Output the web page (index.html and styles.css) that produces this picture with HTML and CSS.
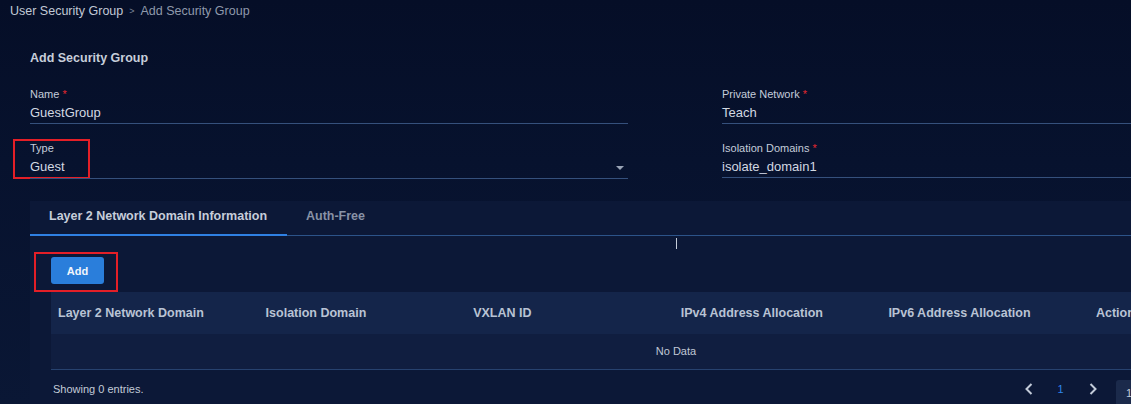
FILE: index.html
```html
<!DOCTYPE html>
<html>
<head>
<meta charset="utf-8">
<link rel="stylesheet" href="styles.css">
</head>
<body>
<div class="page">
  <div class="crumbs">
    <span class="crumb">User Security Group</span>
    <span class="sep">&gt;</span>
    <span class="crumb current">Add Security Group</span>
  </div>

  <div class="content">
    <h1 class="title">Add Security Group</h1>

    <div class="form">
      <div class="field">
        <div class="label">Name <span class="req">*</span></div>
        <div class="value">GuestGroup</div>
      </div>
      <div class="field">
        <div class="label">Private Network <span class="req">*</span></div>
        <div class="value">Teach</div>
      </div>
      <div class="field select annotated">
        <span class="mark mark-type"></span>
        <div class="label">Type</div>
        <div class="value">Guest<span class="caret"></span></div>
      </div>
      <div class="field">
        <div class="label">Isolation Domains <span class="req">*</span></div>
        <div class="value">isolate_domain1</div>
      </div>
    </div>

    <div class="panel">
      <div class="tabs">
        <div class="tab active">Layer 2 Network Domain Information</div>
        <div class="tab">Auth-Free</div>
      </div>
      <div class="cursor-row"><span class="cursor"></span></div>
      <div class="panel-body">
        <div class="toolbar">
          <div class="annotated">
            <span class="mark mark-add"></span>
            <button class="btn">Add</button>
          </div>
        </div>
        <div class="table">
          <div class="thead">
            <div class="th">Layer 2 Network Domain</div>
            <div class="th">Isolation Domain</div>
            <div class="th">VXLAN ID</div>
            <div class="th">IPv4 Address Allocation</div>
            <div class="th">IPv6 Address Allocation</div>
            <div class="th">Action</div>
          </div>
          <div class="empty">No Data</div>
        </div>
        <div class="footer">
          <span class="count">Showing 0 entries.</span>
          <div class="pager">
            <svg class="chev" width="10" height="14" viewBox="0 0 10 14"><path d="M7.5 2 L2.5 7 L7.5 12" fill="none" stroke="#c3cbd9" stroke-width="2"/></svg>
            <span class="page-num">1</span>
            <svg class="chev chev-next" width="10" height="14" viewBox="0 0 10 14"><path d="M2.5 2 L7.5 7 L2.5 12" fill="none" stroke="#c3cbd9" stroke-width="2"/></svg>
            <span class="size">10</span>
          </div>
        </div>
      </div>
    </div>
  </div>
</div>
</body>
</html>
```

FILE: styles.css
```css
* { box-sizing: border-box; }
html, body {
  margin: 0;
  padding: 0;
  width: 1131px;
  height: 404px;
  overflow: hidden;
}
body {
  font-family: "Liberation Sans", Arial, sans-serif;
  background: linear-gradient(180deg, #050e27 0%, #07122e 40%, #0a1735 100%);
  color: #c9d0dc;
}
.page {
  width: 1131px;
  height: 404px;
  overflow: hidden;
}
.crumbs {
  display: flex;
  align-items: center;
  height: 21px;
  padding-left: 10px;
  font-size: 12.5px;
  gap: 6px;
}
.crumb { color: #c2c9d6; }
.crumb.current { color: #8f99ab; }
.sep { color: #7d879a; font-size: 9px; }

.content {
  padding-left: 30px;
}
.title {
  margin: 29px 0 0 0;
  height: 16px;
  line-height: 16px;
  font-size: 12.5px;
  font-weight: bold;
  color: #c7ceda;
}
.form {
  display: grid;
  grid-template-columns: 598px 598px;
  column-gap: 94px;
  row-gap: 17px;
  margin-top: 21px;
  width: 1300px;
}
.field { position: relative; }
.label {
  height: 14px;
  line-height: 14px;
  font-size: 11px;
  color: #c4ccda;
  margin-bottom: 2px;
}
.req { color: #e5282f; }
.value {
  position: relative;
  height: 21px;
  line-height: 20px;
  font-size: 13px;
  color: #d2d8e2;
  border-bottom: 1px solid #35507c;
}
.select .value { height: 22px; line-height: 20px; }
.caret {
  position: absolute;
  right: 4px;
  top: 9px;
  width: 0;
  height: 0;
  border-left: 4px solid transparent;
  border-right: 4px solid transparent;
  border-top: 4px solid #9aa4b6;
}
.annotated { position: relative; }
.mark {
  position: absolute;
  border: 2px solid #e41f27;
  pointer-events: none;
}
.mark-type {
  left: -17px;
  top: -2px;
  width: 77px;
  height: 40px;
}
.mark-add {
  left: -17px;
  top: -5px;
  width: 84px;
  height: 40px;
}

.panel {
  margin-top: 22px;
  width: 1300px;
  height: 220px;
  background: #0c1837;
}
.tabs {
  display: flex;
  height: 35px;
  border-bottom: 1px solid #2c5389;
}
.tab {
  height: 35px;
  line-height: 31px;
  padding: 0 19px;
  font-size: 12.5px;
  font-weight: bold;
  color: #8892a6;
}
.tab.active {
  color: #c6cdda;
  border-bottom: 2px solid #2f80e3;
  width: 257px;
}
.cursor-row {
  position: relative;
  height: 0;
}
.cursor {
  position: absolute;
  left: 646px;
  top: 2px;
  width: 1px;
  height: 11px;
  background: #c6cdda;
}
.panel-body {
  padding: 21px 0 0 21px;
}
.toolbar {
  height: 35px;
  display: flex;
  align-items: flex-start;
}
.btn {
  display: block;
  width: 53px;
  height: 27px;
  border: none;
  border-radius: 3px;
  background: #2a7edb;
  color: #f1f5fb;
  font-family: "Liberation Sans", Arial, sans-serif;
  font-size: 11px;
  font-weight: bold;
  padding: 0;
}
.table {
  width: 1250px;
  border-bottom: 1px solid #27426f;
}
.thead {
  display: grid;
  grid-template-columns: repeat(6, 207.6px);
  height: 42px;
  background: #14254a;
  align-items: center;
}
.th {
  padding-left: 7px;
  font-size: 12.5px;
  font-weight: bold;
  color: #b9c3d4;
}
.empty {
  height: 35px;
  line-height: 35px;
  text-align: center;
  font-size: 11px;
  color: #c0c8d6;
  background: #101e40;
}
.footer {
  display: flex;
  align-items: center;
  justify-content: space-between;
  height: 38px;
  width: 1115px;
  padding-left: 2px;
}
.count {
  font-size: 11px;
  color: #c3cbd8;
}
.pager {
  display: flex;
  align-self: stretch;
  align-items: flex-start;
}
.chev { display: block; margin-top: 12px; }
.chev-next { margin-left: 1px; }
.page-num {
  width: 53px;
  margin-top: 12px;
  line-height: 14px;
  text-align: center;
  font-size: 11px;
  color: #2f84ea;
}
.size {
  margin-left: 18px;
  margin-top: 10px;
  width: 50px;
  height: 26px;
  line-height: 26px;
  padding-left: 10px;
  background: #1b2a4b;
  border-radius: 3px;
  font-size: 11px;
  color: #c3cbd8;
}
```
